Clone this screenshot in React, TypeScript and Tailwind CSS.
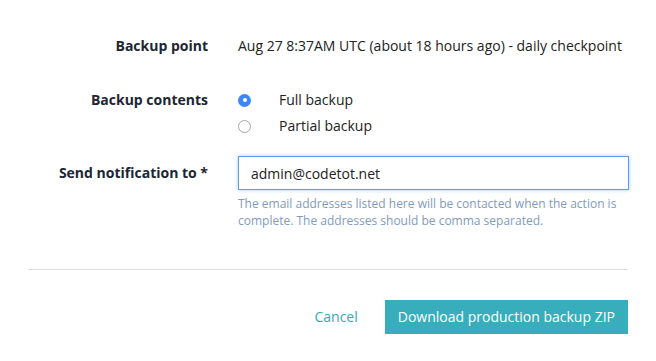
import React from "react";

const Label: React.FC<{ children: React.ReactNode }> = ({ children }) => (
  <div className="text-right font-bold text-[#1c2633]">{children}</div>
);

const Radio: React.FC<{ checked?: boolean; label: string }> = ({ checked, label }) => (
  <label className="flex h-[26px] items-center">
    {checked ? (
      <span className="flex h-[13px] w-[13px] items-center justify-center rounded-full bg-[#3a87f5]">
        <span className="h-[4px] w-[4px] rounded-full bg-white" />
      </span>
    ) : (
      <span className="h-[13px] w-[13px] rounded-full border border-[#a6a6a6] bg-white" />
    )}
    <span className="ml-[28px]">{label}</span>
  </label>
);

export default function App() {
  return (
    <div className="w-[656px] h-[361px] bg-white text-[14px] leading-[20px] text-[#222] font-['Open_Sans',sans-serif]">
      <div className="grid grid-cols-[208px_390px] gap-x-[30px] pt-[36px]">
        <Label>Backup point</Label>
        <div>Aug 27 8:37AM UTC (about 18 hours ago) - daily checkpoint</div>

        <div className="mt-[31px] pt-[3px]">
          <Label>Backup contents</Label>
        </div>
        <div className="mt-[31px]">
          <Radio checked label="Full backup" />
          <Radio label="Partial backup" />
        </div>

        <div className="mt-[17px] pt-[7px]">
          <Label>Send notification to *</Label>
        </div>
        <div className="mt-[17px]">
          <input
            readOnly
            value="admin@codetot.net"
            className="h-[34px] w-[391px] border border-[#5b9bea] px-[12px] text-[14px] text-[#222] shadow-[0_0_4px_rgba(74,144,226,0.45)] outline-none"
          />
          <p className="mt-[5px] text-[12px] leading-[17px] text-[#7f9bbd]">
            The email addresses listed here will be contacted when the action is complete. The addresses should be comma separated.
          </p>
        </div>
      </div>

      <div className="ml-[28px] mr-[28px] mt-[40px] border-t border-[#dedede]" />

      <div className="mr-[28px] mt-[30px] flex items-center justify-end">
        <button className="text-[#39a8b8]">Cancel</button>
        <button className="ml-[27px] h-[34px] bg-[#38adbb] px-[13px] text-white">Download production backup ZIP</button>
      </div>
    </div>
  );
}
